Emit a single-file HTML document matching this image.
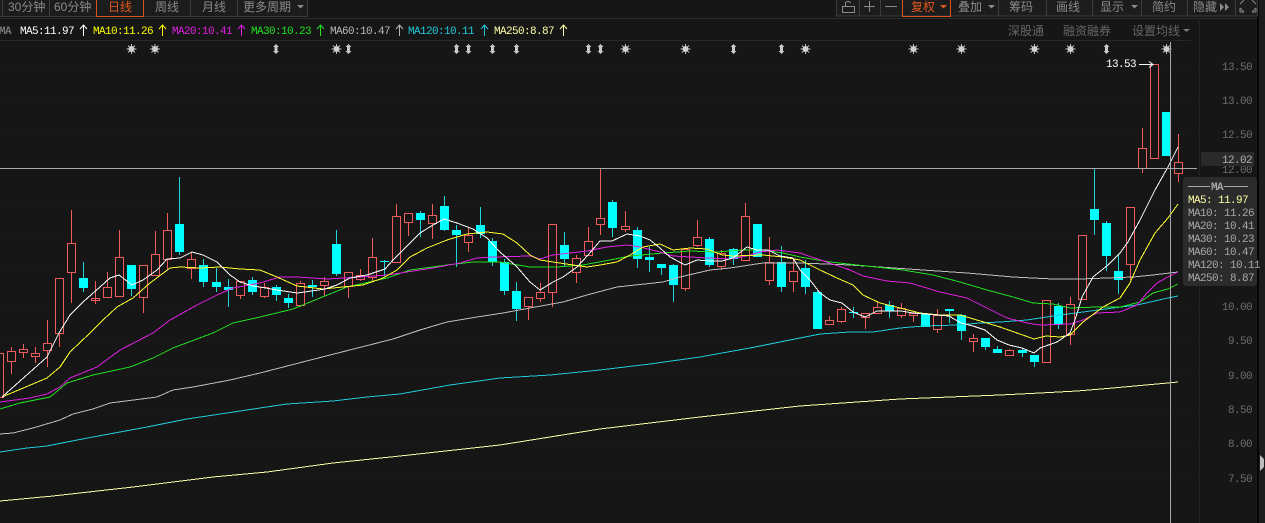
<!DOCTYPE html>
<html><head><meta charset="utf-8"><style>
html,body{margin:0;padding:0;background:#161616;overflow:hidden;width:1265px;height:523px}
svg{display:block}
.m{font-family:"Liberation Mono",monospace;font-size:11px;letter-spacing:-.6px}
.c{font-family:"Liberation Sans","Noto Sans CJK SC",sans-serif;font-size:12px}
.l{fill:none;stroke-width:1;stroke-linejoin:round;shape-rendering:crispEdges}
</style></head><body>
<svg width="1265" height="523" viewBox="0 0 1265 523" xmlns="http://www.w3.org/2000/svg">
<defs>
<g id="s"><path d="M-5 0H5M0-5V5M-3.5-3.5L3.5 3.5M-3.5 3.5L3.5-3.5" stroke="#bdbdbd" stroke-width="1"/><circle r="3" fill="#cfcfcf"/></g>
<path id="d" d="M0-5L3-2H1.500V2H3L0 5L-3 2H-1.500V-2H-3Z" fill="#c8c8c8"/>
</defs>
<rect width="1265" height="523" fill="#161616"/>
<rect x="1258" width="7" height="523" fill="#1d1d1d"/>
<rect x="1257" width="2" height="523" fill="#060606"/>
<path d="M1260 455L1264 459V467L1260 471Z" fill="#bdbdbd"/>
<!-- toolbar -->
<rect x="0" y="0" width="307" height="16" fill="#1c1c1c"/>
<rect x="836" y="0" width="421" height="16" fill="#1c1c1c"/>
<path d="M0 16.500H307.500V0M2.500 0V16M49.500 0V16M190.500 0V16M237.500 0V16M836.500 0V16H1257.500V0M859.500 0V16M880.500 0V16M998.500 0V16M1046.500 0V16M1092.500 0V16M1141.500 0V16M1187.500 0V16M1235.500 0V16" stroke="#3c3c3c" fill="none"/>
<path d="M96.500 0V16.500H143.500V0M902.500 0V16.500H950.500V0" stroke="#d9541c" fill="none"/>
<path d="M0 18.500H1257" stroke="#2c2c2c"/>
<path d="M0 40.500H1191" stroke="#272727"/>
<path d="M1199.500 18V523" stroke="#222"/>
<g class="c" fill="#8a8a8a">
<text x="8" y="11">30分钟</text><text x="54" y="11">60分钟</text>
<text x="108" y="11" fill="#e0591c">日线</text>
<text x="155" y="11">周线</text><text x="202" y="11">月线</text><text x="243" y="11">更多周期</text>
<text x="911" y="11" fill="#e0591c">复权</text>
<text x="958" y="11">叠加</text><text x="1009" y="11">筹码</text><text x="1056" y="11">画线</text>
<text x="1100" y="11">显示</text><text x="1152" y="11">简约</text><text x="1193" y="11">隐藏</text>
</g>
<path d="M297 5H304L300.500 8.500Z" fill="#8a8a8a"/>
<path d="M940 5H947L943.500 8.500Z" fill="#e0591c"/>
<path d="M988 5H995L991.500 8.500Z" fill="#8a8a8a"/>
<path d="M1131 5H1138L1134.500 8.500Z" fill="#8a8a8a"/>
<path d="M1220 3L1224 7L1220 11ZM1225 3L1229 7L1225 11Z" fill="#8a8a8a"/>
<path d="M842.500 6.500H854.500V12.500H842.500ZM845.500 6V2.500Q848 0 851 3" stroke="#8a8a8a" fill="none"/>
<path d="M864 6.500H875M869.500 1V12M885 6.500H897" stroke="#8a8a8a" fill="none"/>
<path d="M1240 4L1244 0M1252 0L1256 4M1240 8L1244 12M1256 8L1252 12M1240 12H1244M1240 8V12M1252 12H1256V8" stroke="#8a8a8a" fill="none"/>
<!-- grid -->
<path d="M0 66.500H1197M0 100.500H1197M0 134.500H1197M0 203.500H1197M0 237.500H1197M0 271.500H1197M0 306.500H1197M0 340.500H1197M0 375.500H1197M0 409.500H1197M0 443.500H1197M0 478.500H1197" stroke="#1e1e1e" stroke-dasharray="1 2"/>
<!-- MA row -->
<g class="m">
<text x="-1" y="34" fill="#777" font-weight="bold">MA</text>
<text x="20" y="34" fill="#fff">MA5:11.97</text>
<text x="93" y="34" fill="#ff0">MA10:11.26</text>
<text x="172" y="34" fill="#e020e0">MA20:10.41</text>
<text x="251" y="34" fill="#20e020">MA30:10.23</text>
<text x="330" y="34" fill="#b8b8b8">MA60:10.47</text>
<text x="408" y="34" fill="#20c8d8">MA120:10.11</text>
<text x="494" y="34" fill="#ffffa8">MA250:8.87</text>
</g>
<g fill="none" stroke-width="1">
<path d="M83.500 36V25M80 29L83.500 25L87 29" stroke="#fff"/>
<path d="M162.500 36V25M159 29L162.500 25L166 29" stroke="#ff0"/>
<path d="M241.500 36V25M238 29L241.500 25L245 29" stroke="#e020e0"/>
<path d="M320.500 36V25M317 29L320.500 25L324 29" stroke="#20e020"/>
<path d="M399.500 36V25M396 29L399.500 25L403 29" stroke="#b8b8b8"/>
<path d="M484.500 36V25M481 29L484.500 25L488 29" stroke="#20c8d8"/>
<path d="M563.500 36V25M560 29L563.500 25L567 29" stroke="#ffffa8"/>
</g>
<g class="c" fill="#666">
<text x="1008" y="35">深股通</text><text x="1063" y="35">融资融券</text><text x="1132" y="35">设置均线</text>
</g>
<path d="M1183 29H1190L1186.500 32Z" fill="#777"/>
<!-- markers -->
<use href="#s" x="131.500" y="49"/><use href="#s" x="155" y="49"/><use href="#d" x="276" y="49"/><use href="#s" x="336.500" y="49"/><use href="#d" x="348.500" y="49"/>
<use href="#d" x="456.500" y="49"/><use href="#d" x="468.500" y="49"/><use href="#d" x="492.500" y="49"/><use href="#d" x="516.500" y="49"/><use href="#d" x="588.500" y="49"/><use href="#d" x="600.500" y="49"/><use href="#s" x="625.500" y="49"/><use href="#s" x="685.500" y="49"/><use href="#d" x="733.500" y="49"/><use href="#d" x="781.500" y="49"/><use href="#s" x="805.500" y="49"/>
<use href="#s" x="913.500" y="49"/><use href="#s" x="961.500" y="49"/><use href="#s" x="1034.500" y="49"/><use href="#s" x="1070.500" y="49"/><use href="#d" x="1106.500" y="49"/><use href="#s" x="1166.500" y="49"/>
<!-- candles red -->
<path fill="none" stroke="#f05c5c" stroke-width="1" d="M-4.500 353.500H3.500V397.500H-4.500Z
M11.500 347V351M11.500 361V374M7.500 351.500H15.500V361.500H7.500Z
M23.500 344V349M23.500 352V358M19.500 349.500H27.500V352.500H19.500Z
M35.500 347V353M35.500 356V363M31.500 353.500H39.500V356.500H31.500Z
M47.500 320V343M47.500 350V367M43.500 343.500H51.500V350.500H43.500Z
M59.500 333V347M55.500 278.500H63.500V333.500H55.500Z
M71.500 210V243M71.500 272V303M67.500 243.500H75.500V272.500H67.500Z
M95.500 281V304M91.500 298.500H99.500V300.500H91.500Z
M107.500 272V287M103.500 287.500H111.500V297.500H103.500Z
M119.500 230V257M119.500 296V297M115.500 257.500H123.500V296.500H115.500Z
M143.500 297V313M139.500 265.500H147.500V297.500H139.500Z
M155.500 231V254M151.500 254.500H159.500V275.500H151.500Z
M167.500 213V230M167.500 259V270M163.500 230.500H171.500V259.500H163.500Z
M191.500 252V259M191.500 268V279M187.500 259.500H195.500V268.500H187.500Z
M240.500 295V299M236.500 281.500H244.500V295.500H236.500Z
M264.500 283V287M264.500 296V298M260.500 287.500H268.500V296.500H260.500Z
M300.500 281V283M300.500 305V307M296.500 283.500H304.500V305.500H296.500Z
M324.500 277V281M324.500 285V296M320.500 281.500H328.500V285.500H320.500Z
M348.500 286V298M344.500 272.500H352.500V286.500H344.500Z
M360.500 269V275M360.500 279V281M356.500 275.500H364.500V279.500H356.500Z
M372.500 238V257M372.500 277V282M368.500 257.500H376.500V277.500H368.500Z
M396.500 204V216M392.500 216.500H400.500V262.500H392.500Z
M408.500 222V236M404.500 213.500H412.500V222.500H404.500Z
M432.500 204V215M432.500 223V239M428.500 215.500H436.500V223.500H428.500Z
M468.500 227V235M468.500 242V252M464.500 235.500H472.500V242.500H464.500Z
M528.500 306V320M524.500 297.500H532.500V306.500H524.500Z
M540.500 283V292M540.500 298V302M536.500 292.500H544.500V298.500H536.500Z
M552.500 292V307M548.500 224.500H556.500V292.500H548.500Z
M576.500 255V258M576.500 272V283M572.500 258.500H580.500V272.500H572.500Z
M588.500 227V241M584.500 241.500H592.500V255.500H584.500Z
M600.500 168V218M600.500 224V235M596.500 218.500H604.500V224.500H596.500Z
M625.500 211V226M625.500 229V232M621.500 226.500H629.500V229.500H621.500Z
M685.500 288V291M681.500 249.500H689.500V288.500H681.500Z
M697.500 220V237M697.500 245V247M693.500 237.500H701.500V245.500H693.500Z
M721.500 250V253M721.500 266V270M717.500 253.500H725.500V266.500H717.500Z
M745.500 203V216M745.500 260V261M741.500 216.500H749.500V260.500H741.500Z
M769.500 237V262M769.500 280V285M765.500 262.500H773.500V280.500H765.500Z
M793.500 259V271M793.500 281V292M789.500 271.500H797.500V281.500H789.500Z
M829.500 316V320M825.500 320.500H833.500V324.500H825.500Z
M841.500 307V309M841.500 321V323M837.500 309.500H845.500V321.500H837.500Z
M865.500 317V329M861.500 313.500H869.500V317.500H861.500Z
M877.500 302V307M873.500 307.500H881.500V313.500H873.500Z
M901.500 303V308M901.500 315V318M897.500 308.500H905.500V315.500H897.500Z
M913.500 311V313M913.500 315V322M909.500 313.500H917.500V315.500H909.500Z
M937.500 309V315M937.500 329V333M933.500 315.500H941.500V329.500H933.500Z
M973.500 334V338M973.500 341V352M969.500 338.500H977.500V341.500H969.500Z
M1009.500 349V350M1005.500 350.500H1013.500V355.500H1005.500Z
M1046.500 362V363M1042.500 300.500H1050.500V362.500H1042.500Z
M1070.500 297V304M1070.500 334V345M1066.500 304.500H1074.500V334.500H1066.500Z
M1078.500 235.500H1086.500V299.500H1078.500Z
M1130.500 264V280M1126.500 207.500H1134.500V264.500H1126.500Z
M1142.500 128V148M1142.500 168V173M1138.500 148.500H1146.500V168.500H1138.500Z
M1150.500 64.500H1158.500V158.500H1150.500Z
M1178.500 134V162M1178.500 173V182M1174.500 162.500H1182.500V173.500H1174.500Z"/>
<!-- cyan wicks -->
<path fill="none" stroke="#1fd5dc" stroke-width="1" d="M83.500 262V292M131.500 265V296M179.500 177V255M203.500 259V287M216.500 268V292M228.500 279V307M252.500 277V295M276.500 285V301M288.500 294V308M312.500 280V297M336.500 230V276M384.500 260V276M420.500 211V237M444.500 196V231M456.500 225V267M480.500 207V238M492.500 238V266M504.500 259V295M516.500 282V321M564.500 232V267M612.500 200V237M637.500 227V268M649.500 247V272M661.500 264V275M673.500 264V302M709.500 237V267M733.500 248V265M757.500 224V257M781.500 246V292M805.500 260V294M817.500 291V329M853.500 307V318M889.500 301V318M925.500 313V327M949.500 309V323M961.500 314V340M985.500 338V350M997.500 346V353M1022.500 349V357M1034.500 355V367M1058.500 303V329M1094.500 169V235M1106.500 221V271M1118.500 254V294M1166.500 112V156"/>
<!-- cyan bodies -->
<path fill="#00ffff" d="M79 278h9v10h-9zM127 265h9v24h-9zM175 224h9v28h-9zM199 265h9v17h-9zM212 282h9v5h-9zM224 287h9v3h-9zM248 280h9v12h-9zM272 287h9v8h-9zM284 298h9v5h-9zM308 285h9v2h-9zM332 244h9v30h-9zM380 261h9v1h-9zM416 213h9v7h-9zM440 206h9v24h-9zM452 230h9v5h-9zM476 225h9v9h-9zM488 241h9v21h-9zM500 262h9v29h-9zM512 291h9v18h-9zM560 245h9v14h-9zM608 202h9v26h-9zM633 230h9v29h-9zM645 257h9v3h-9zM657 264h9v4h-9zM669 265h9v20h-9zM705 239h9v26h-9zM729 249h9v10h-9zM753 224h9v33h-9zM777 262h9v25h-9zM801 268h9v19h-9zM813 292h9v37h-9zM849 312h9v1h-9zM885 305h9v6h-9zM921 314h9v13h-9zM945 309h9v2h-9zM957 315h9v16h-9zM981 338h9v9h-9zM993 349h9v4h-9zM1018 350h9v3h-9zM1030 355h9v7h-9zM1054 306h9v18h-9zM1090 209h9v11h-9zM1102 223h9v33h-9zM1114 271h9v9h-9zM1162 112h9v44h-9z"/>
<!-- MA lines -->
<polyline class="l" stroke="#ffffa8" points="0,501 53,496 133,487 213,477 267,472 333,463 400,456 500,445 600,429 700,417 800,406 900,399 1000,395 1040,393 1077,391 1113,388 1157,384 1178,382"/>
<polyline class="l" stroke="#20c8d8" points="0,452 27,448 47,446 67,442 93,437 120,432 147,427 187,419 227,413 260,408 287,404 333,401 367,397 400,394 450,385 500,378 550,375 600,370 650,364 700,357 750,348 800,338 820,334 850,332 873,332 900,328 923,326 957,325 980,323 1000,322 1027,320 1060,315 1083,312 1113,308 1137,305 1168,298 1178,296"/>
<polyline class="l" stroke="#bdbdbd" points="0,434 13,433 33,428 60,420 73,414 93,409 110,403 157,397 173,390 193,387 230,380 260,373 330,355 393,339 420,330 447,322 477,317 503,313 530,308 563,302 587,295 617,287 663,282 680,277 710,270 730,268 763,263 800,263 850,265 923,270 967,273 1013,277 1053,279 1080,279 1133,277 1153,275 1178,272"/>
<polyline class="l" stroke="#20e020" points="0,409 20,403 50,397 67,383 93,375 130,367 153,358 173,348 213,333 233,323 260,317 293,309 320,298 347,287 387,278 410,270 447,265 473,262 500,262 530,267 557,267 583,265 610,260 630,256 663,253 690,251 717,252 743,250 763,250 783,253 800,257 830,262 903,270 933,275 960,282 987,290 1013,297 1033,303 1053,304 1070,308 1097,307 1120,307 1140,302 1153,293 1168,289 1178,284"/>
<polyline class="l" stroke="#e020e0" points="0,402 30,398 47,394 60,387 70,378 97,367 120,350 153,333 170,320 197,305 217,295 233,288 260,283 280,277 297,277 327,279 360,277 387,275 407,272 433,268 460,263 477,258 493,257 530,256 540,259 553,255 570,253 587,251 607,247 627,245 640,247 660,252 673,256 690,257 707,258 730,259 747,256 760,252 777,250 800,253 850,270 863,276 887,281 910,283 940,292 967,298 987,308 1007,318 1027,323 1040,325 1070,324 1083,320 1097,313 1120,312 1137,305 1147,293 1157,283 1168,277 1178,272"/>
<polyline class="l" stroke="#ffff30" points="2,397 47,378 60,367 70,352 90,333 103,320 117,307 133,298 150,283 170,268 180,267 200,268 220,267 240,269 260,270 277,277 297,286 323,289 343,287 363,285 383,278 397,270 410,257 427,248 447,240 467,234 487,232 503,234 517,243 530,255 540,260 553,262 573,265 587,267 600,265 617,262 630,255 643,247 660,244 673,250 690,248 707,249 722,255 733,256 763,255 783,257 800,260 820,270 837,278 853,285 863,295 880,303 900,308 920,313 940,315 960,315 977,320 1000,327 1017,333 1034,339 1046,336 1060,337 1070,335 1083,322 1103,307 1120,298 1130,283 1140,260 1155,233 1168,218 1178,204"/>
<polyline class="l" stroke="#fff" points="2,397 47,357 59,333 70,315 83,302 100,287 110,278 119,275 132,285 143,280 157,270 167,259 180,258 192,252 203,255 217,262 230,275 240,282 253,286 260,287 277,290 297,293 312,291 325,289 337,285 350,278 367,275 385,269 393,260 407,246 420,233 433,225 444,219 457,223 473,229 487,238 500,252 517,267 530,282 540,290 553,282 563,277 577,267 588,255 600,241 612,241 627,234 640,236 650,240 660,248 670,257 685,265 697,260 710,261 722,261 733,258 747,247 757,250 768,250 780,256 793,258 800,270 810,280 820,293 830,300 842,303 853,312 865,317 877,311 889,311 901,311 913,313 925,314 937,315 949,316 961,323 973,326 985,330 997,340 1009,345 1022,348 1034,353 1040,348 1057,342 1070,333 1075,320 1082,297 1093,277 1108,265 1120,253 1128,242 1140,220 1155,190 1168,167 1178,147"/>
<!-- crosshair -->
<path d="M0 168.500H1197M1170.500 42V523" stroke="#a8a8a8" fill="none"/>
<!-- high label -->
<text class="m" x="1106" y="67" fill="#fff">13.53</text>
<path d="M1139 64.500H1153M1149 61.500L1153 64.500L1149 67.500" stroke="#fff" fill="none"/>
<!-- price axis -->
<g class="m" fill="#6e6e6e">
<text x="1222" y="70">13.50</text><text x="1222" y="104">13.00</text><text x="1222" y="138">12.50</text><text x="1222" y="173">12.00</text>
<text x="1222" y="310">10.00</text><text x="1228" y="344">9.50</text><text x="1228" y="379">9.00</text><text x="1228" y="413">8.50</text><text x="1228" y="447">8.00</text><text x="1228" y="482">7.50</text>
</g>
<rect x="1201" y="152" width="53" height="14" fill="#2a2a2a"/>
<text class="m" x="1222" y="163" fill="#b0b0b0">12.02</text>
<!-- tooltip -->
<rect x="1183" y="177" width="74" height="109" rx="3" fill="#2b2b2b"/>
<path d="M1188 186.500H1210M1224 186.500H1248" stroke="#a8a8a8"/>
<g class="m" fill="#a8a8a8">
<text x="1211" y="190" font-weight="bold">MA</text>
<text x="1188" y="203" fill="#ffffa8">MA5: 11.97</text>
<text x="1188" y="216">MA10: 11.26</text>
<text x="1188" y="229">MA20: 10.41</text>
<text x="1188" y="242">MA30: 10.23</text>
<text x="1188" y="255">MA60: 10.47</text>
<text x="1188" y="268">MA120: 10.11</text>
<text x="1188" y="281">MA250: 8.87</text>
</g>
</svg>
</body></html>
